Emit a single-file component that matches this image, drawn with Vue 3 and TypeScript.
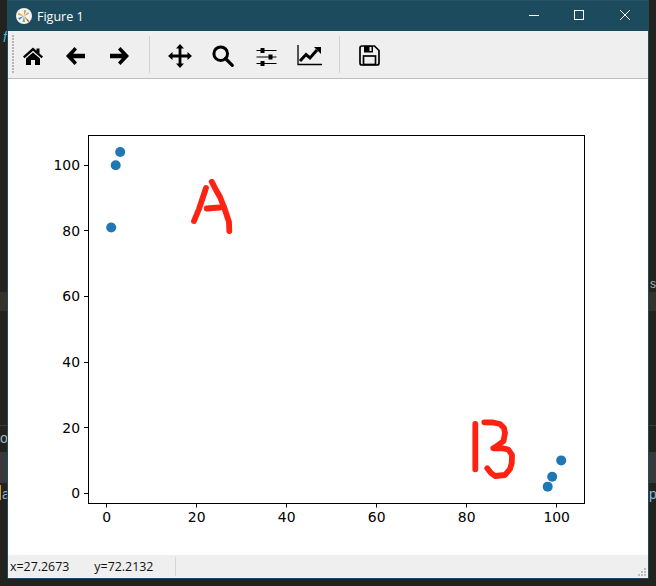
<script setup lang="ts">
const X = (v: number) => 106.7 + 4.5 * v
const Y = (v: number) => 493.2 - 3.28 * v
const snap = (v: number) => Math.round(v - 0.5) + 0.5
const xTicks = [0, 20, 40, 60, 80, 100]
const yTicks = [0, 20, 40, 60, 80, 100]
const points: [number, number][] = [[3, 104], [2, 100], [1, 81], [101, 10], [99, 5], [98, 2]]
const dots = Array.from({ length: 13 })
</script>

<template>
  <div class="desktop">
    <div class="bg-band b1"></div>
    <div class="bg-band b2"></div>
    <div class="bg-line"></div>
    <span class="bg-txt t1">f</span>
    <span class="bg-txt t2">o</span>
    <span class="bg-txt t3">a</span>
    <span class="bg-mark"></span>
    <span class="bg-txt t4">s</span>
    <span class="bg-txt t5">p</span>

    <div class="window">
      <header class="titlebar">
        <svg class="logo" width="16" height="16" viewBox="0 0 16 16">
          <circle cx="8" cy="8" r="8" fill="#f6f4ee" />
          <path d="M8 8 L2.5 4.5 L2 7Z" fill="#e8a33a" />
          <path d="M8 8 L8 2 L10.5 2.5Z" fill="#e8a33a" />
          <path d="M8 8 L2 10 L3.5 12Z" fill="#4d8fc0" />
          <path d="M8 8 L13.5 13 L12 14Z" fill="#d9542b" />
          <path d="M8 8 L6.5 14 L9 14Z" fill="#6fae6a" />
          <path d="M8 8 L12 4 L13 6Z" fill="#9bb0bd" />
        </svg>
        <span class="title">Figure 1</span>
        <div class="winbtns">
          <svg width="46" height="31" viewBox="0 0 46 31"><path d="M19 15.5H29" stroke="#fff" fill="none" /></svg>
          <svg width="46" height="31" viewBox="0 0 46 31"><rect x="18.5" y="10.5" width="9" height="9" stroke="#fff" fill="none" /></svg>
          <svg width="46" height="31" viewBox="0 0 46 31"><path d="M18 10L28 20M28 10L18 20" stroke="#fff" fill="none" /></svg>
        </div>
      </header>

      <div class="toolbar">
        <div class="grip"><i v-for="(_, i) in dots" :key="i"></i></div>
        <button class="tool home">
          <svg width="22" height="20" viewBox="0 0 22 20"><path d="M11 1.5 L1 10.5 L2.5 12.3 L11 4.8 L19.5 12.3 L21 10.5 L17.5 7.4 V2.5 H14.5 V4.7Z M4 12.5 L11 6.4 L18 12.5 V19 H13 V14 H9 V19 H4Z" fill="#000" /></svg>
        </button>
        <button class="tool back">
          <svg width="22" height="20" viewBox="0 0 22 20"><path d="M9.5 1 L1 10 L9.5 19 L12 16.5 L8.2 12.2 H20 V7.8 H8.2 L12 3.5Z" fill="#000" /></svg>
        </button>
        <button class="tool fwd">
          <svg width="22" height="20" viewBox="0 0 22 20"><path d="M12.5 1 L21 10 L12.5 19 L10 16.5 L13.8 12.2 H2 V7.8 H13.8 L10 3.5Z" fill="#000" /></svg>
        </button>
        <span class="sep s1"></span>
        <button class="tool move">
          <svg width="24" height="24" viewBox="0 0 24 24"><path d="M12 0 L16 4.5 H13.4 V10.6 H19.5 V8 L24 12 L19.5 16 V13.4 H13.4 V19.5 H16 L12 24 L8 19.5 H10.6 V13.4 H4.5 V16 L0 12 L4.5 8 V10.6 H10.6 V4.5 H8Z" fill="#000" /></svg>
        </button>
        <button class="tool zoom">
          <svg width="23" height="23" viewBox="0 0 23 23"><circle cx="8.7" cy="8.7" r="6.8" stroke="#000" stroke-width="3" fill="none" /><path d="M13.5 13.5 L20.3 20.3" stroke="#000" stroke-width="3.2" stroke-linecap="round" /></svg>
        </button>
        <button class="tool sliders">
          <svg width="22" height="20" viewBox="0 0 22 20"><path d="M0.5 3.5H20.5M0.5 10H20.5M0.5 16.5H20.5" stroke="#000" stroke-width="1.2" /><rect x="4.5" y="1" width="4" height="5" /><rect x="12.5" y="7.5" width="4" height="5" /><rect x="4.5" y="14" width="4" height="5" /></svg>
        </button>
        <button class="tool chart">
          <svg width="25" height="21" viewBox="0 0 25 21"><path d="M1 0 V19.5 H25" stroke="#000" stroke-width="1.3" fill="none" /><path d="M3 16 L9 9.5 L13 13 L20 5" stroke="#000" stroke-width="3" fill="none" /><path d="M17 2 H24 V9Z" fill="#000" /></svg>
        </button>
        <span class="sep s2"></span>
        <button class="tool save">
          <svg width="21" height="21" viewBox="0 0 21 21"><path d="M1 3 Q1 1 3 1 H15.5 L20 5.5 V18 Q20 20 18 20 H3 Q1 20 1 18Z" fill="none" stroke="#000" stroke-width="1.7" /><rect x="5" y="1" width="9" height="6.5" fill="#000" /><rect x="10.5" y="2" width="2" height="4" fill="#efefef" /><rect x="4.5" y="11" width="12" height="8.5" fill="none" stroke="#000" stroke-width="1.7" /></svg>
        </button>
      </div>

      <div class="canvas">
        <svg class="plot" width="640" height="476" viewBox="8 79 640 476">
          <circle v-for="(p, i) in points" :key="i" :cx="X(p[0])" :cy="Y(p[1])" r="5" fill="#1f77b4" />
          <g stroke="#ff2212" stroke-width="5.8" stroke-linecap="round" stroke-linejoin="round" fill="none">
            <path d="M194 221 L199 209 L203 197 L206 188" />
            <path d="M211.7 181.7 L216 190 L220 197 L224 207 L229 222 L229.3 231" />
            <path d="M206.7 208.5 L213 208 L220 207.5" />
            <path d="M475.3 424 L475.3 469.3" />
            <path d="M484.3 422.3 L493 422.5 L500 424 L504 428 L505 433 L503.5 441 L497 446 L493.3 448.3 L503 448.3 L508.3 449.5 L512 455 L511.8 463 L510 469 L505 475 L495 476 L491 473 L487.3 468.3" />
          </g>
          <rect x="88.5" y="135.5" width="496" height="368" fill="none" stroke="#000" stroke-width="1" />
          <g v-for="t in xTicks" :key="'x' + t">
            <line :x1="snap(X(t))" :x2="snap(X(t))" y1="504" y2="507.5" stroke="#000" />
            <text :x="X(t)" y="522" text-anchor="middle" class="tick">{{ t }}</text>
          </g>
          <g v-for="t in yTicks" :key="'y' + t">
            <line x1="84" x2="88" :y1="snap(Y(t))" :y2="snap(Y(t))" stroke="#000" />
            <text x="80" :y="Y(t) + 5" text-anchor="end" class="tick">{{ t }}</text>
          </g>
        </svg>
      </div>

      <footer class="statusbar">
        <span class="coord">x=27.2673</span>
        <span class="coord y">y=72.2132</span>
        <span class="vsep"></span>
        <svg class="sizegrip" width="8" height="8" viewBox="0 0 8 8" fill="#bdbdbd">
          <rect x="6" y="0" width="2" height="2" />
          <rect x="3" y="3" width="2" height="2" /><rect x="6" y="3" width="2" height="2" />
          <rect x="0" y="6" width="2" height="2" /><rect x="3" y="6" width="2" height="2" /><rect x="6" y="6" width="2" height="2" />
        </svg>
      </footer>
    </div>
  </div>
</template>

<style>
html, body { margin: 0; background: #22221e; overflow: hidden; }
</style>

<style scoped>
.desktop {
  position: relative;
  width: 656px;
  height: 586px;
  background: #22221e;
  overflow: hidden;
  font-family: "Open Sans", "Noto Sans", sans-serif;
}
.bg-band { position: absolute; left: 0; right: 0; }
.b1 { top: 292px; height: 19px; background: #33332a; }
.b2 { top: 452px; height: 31px; background: #38393c; }
.bg-line { position: absolute; left: 0; right: 0; top: 425px; height: 1px; background: #3c3c38; }
.bg-txt { position: absolute; font: 14px "Liberation Sans", sans-serif; color: #a9b4bd; line-height: 16px; }
.t1 { left: 3px; top: 29px; color: #4fb6d8; font-style: italic; }
.t2 { left: 0; top: 430px; }
.t3 { left: 2px; top: 486px; color: #8fb2d6; }
.bg-mark { position: absolute; left: 0; top: 485px; width: 1px; height: 15px; background: #d8962f; }
.t4 { left: 650px; top: 276px; font-size: 12px; }
.t5 { left: 649px; top: 486px; color: #8fb2d6; }

.window {
  position: absolute;
  left: 7px;
  top: 0;
  width: 640px;
  height: 578px;
  border: 1px solid #1c4b5d;
  border-top: 0;
  display: flex;
  flex-direction: column;
  background: #fff;
}
.titlebar {
  height: 31px;
  flex: none;
  background: #1c4b5d;
  border-top: 1px solid #2a5564;
  box-sizing: border-box;
  display: flex;
  align-items: center;
  color: #fff;
}
.logo { margin-left: 8px; }
.title { margin-left: 5px; font-size: 12.5px; }
.winbtns { margin-left: auto; display: flex; }
.winbtns svg { display: block; margin-top: -1px; }

.toolbar {
  height: 47px;
  flex: none;
  background: #efefef;
  border-bottom: 1px solid #bdbdbd;
  display: flex;
  align-items: center;
  position: relative;
}
.grip {
  position: absolute;
  left: 4px;
  top: 4px;
  width: 2px;
  display: flex;
  flex-direction: column;
  gap: 1px;
}
.grip i { width: 2px; height: 2px; background: #b8b8b8; display: block; }
.tool {
  border: 0;
  padding: 0;
  background: none;
  position: absolute;
  display: flex;
}
.home { left: 14px; top: 15px; }
.back { left: 57px; top: 15px; }
.fwd { left: 100px; top: 15px; }
.move { left: 160px; top: 13px; }
.zoom { left: 204px; top: 14px; }
.sliders { left: 248px; top: 16px; }
.chart { left: 289px; top: 14px; }
.save { left: 351px; top: 14px; }
.sep { position: absolute; top: 5px; width: 1px; height: 37px; background: #d2d2d2; }
.s1 { left: 141px; }
.s2 { left: 331px; }

.canvas { flex: 1; min-height: 0; background: #fff; }
.plot { display: block; }
.tick { font: 13.9px "DejaVu Sans", sans-serif; fill: #000; }

.statusbar {
  height: 23px;
  flex: none;
  background: #efefef;
  display: flex;
  align-items: center;
  position: relative;
  font-size: 12.4px;
  color: #111;
}
.coord { margin-left: 2px; }
.coord.y { margin-left: 25px; }
.vsep { position: absolute; left: 167px; top: 2px; bottom: 2px; width: 1px; background: #d6d6d6; }
.sizegrip { position: absolute; right: 2px; bottom: 2px; }
</style>
